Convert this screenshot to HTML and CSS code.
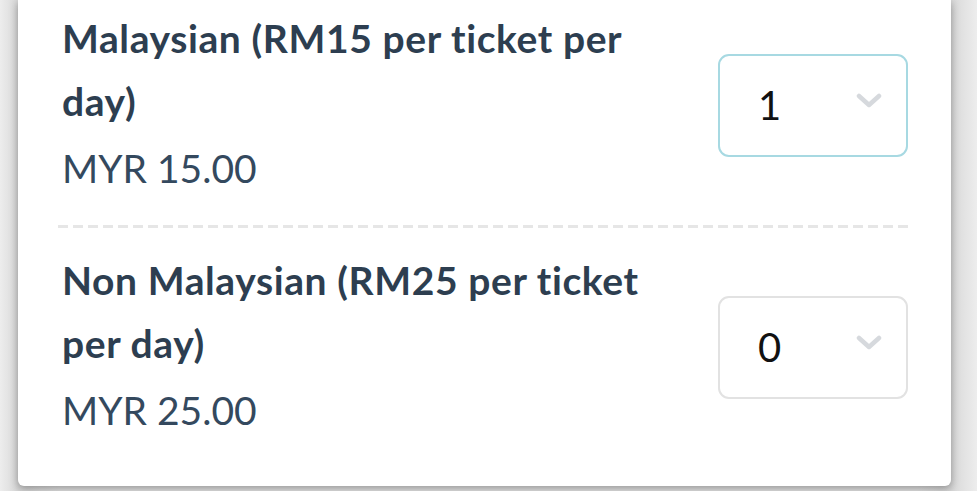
FILE: index.html
```html
<!DOCTYPE html>
<html lang="en">
<head>
  <meta charset="UTF-8" />
  <meta name="viewport" content="width=device-width, initial-scale=1" />
  <title>Tickets</title>
  <link rel="stylesheet" href="styles.css">
</head>
<body>
  <div class="card">
    <div class="ticket">
      <div class="info">
        <div class="name">Malaysian (RM15 per ticket per day)</div>
        <div class="price">MYR 15.00</div>
      </div>
      <div class="qty focused">
        <span class="qty-value">1</span>
        <svg class="chevron" width="26" height="16" viewBox="0 0 26 16">
          <path d="M3 3 L13 12 L23 3" fill="none" stroke="#d6d9dd" stroke-width="4.5" stroke-linecap="round" stroke-linejoin="round" />
        </svg>
      </div>
    </div>

    <div class="divider"></div>

    <div class="ticket">
      <div class="info">
        <div class="name">Non Malaysian (RM25 per ticket per day)</div>
        <div class="price">MYR 25.00</div>
      </div>
      <div class="qty">
        <span class="qty-value">0</span>
        <svg class="chevron" width="26" height="16" viewBox="0 0 26 16">
          <path d="M3 3 L13 12 L23 3" fill="none" stroke="#d6d9dd" stroke-width="4.5" stroke-linecap="round" stroke-linejoin="round" />
        </svg>
      </div>
    </div>
  </div>
</body>
</html>
```

FILE: styles.css
```css
html,
body {
  height: 100%;
  overflow: hidden;
}

body {
  margin: 0;
  font-family: 'Lato', 'Open Sans', sans-serif;
  background: linear-gradient(to right, #ededed 0, #d8d8d8 18px, #e6e6e6 60px, #e6e6e6 917px, #d8d8d8 951px, #ededed 977px);
}

.card {
  width: 933px;
  margin-left: 18px;
  box-sizing: border-box;
  padding: 7px 43px 41px 44px;
  background: #fff;
  border-radius: 0 0 6px 6px;
  box-shadow: 0 3px 8px rgba(0, 0, 0, 0.35);
}

.ticket {
  display: flex;
  align-items: center;
  justify-content: space-between;
}

.info {
  width: 600px;
  color: #2d3e50;
}

.name {
  font-size: 39px;
  font-weight: bold;
  line-height: 63px;
  letter-spacing: 0.6px;
}

.price {
  font-size: 39px;
  line-height: 70px;
  color: #34495e;
}

.divider {
  height: 3px;
  margin: 22px -4px 21px;
  background: repeating-linear-gradient(to right, #e6e6e6 0, #e6e6e6 10px, transparent 10px, transparent 15px);
}

.qty {
  width: 190px;
  height: 103px;
  box-sizing: border-box;
  border: 2px solid #e2e2e2;
  border-radius: 11px;
  display: flex;
  align-items: center;
  justify-content: space-between;
  padding: 0 24px 0 38px;
}

.qty.focused {
  border-color: #a7d9e2;
}

.qty-value {
  font-size: 40px;
  color: #111;
}

.chevron {
  margin-top: -8px;
}
```
